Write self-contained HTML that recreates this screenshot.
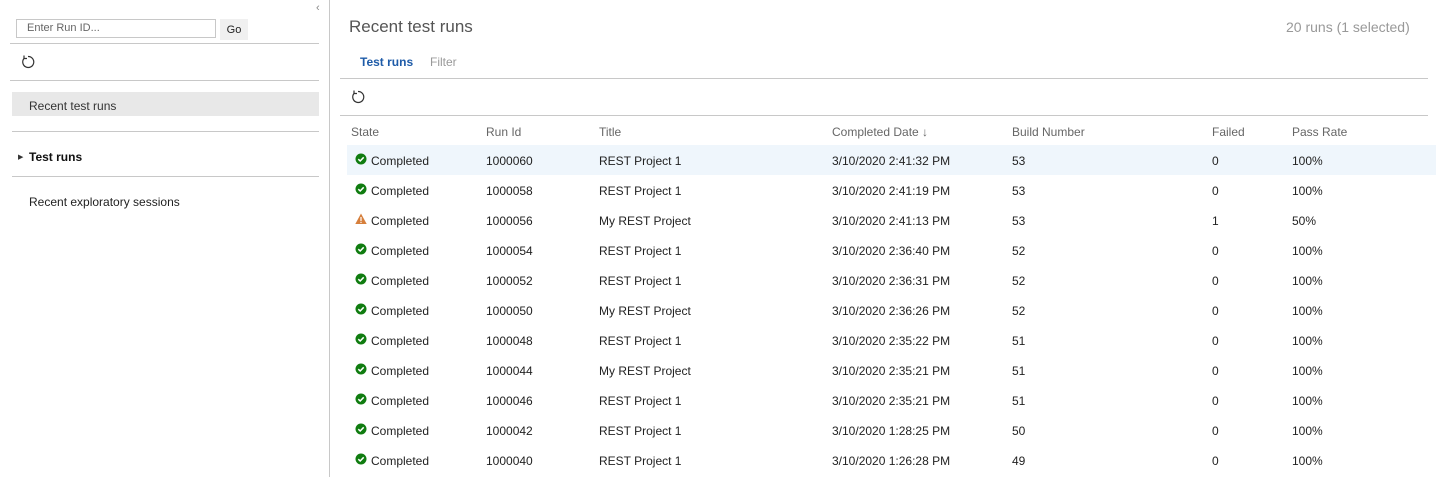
<!DOCTYPE html>
<html><head><style>
*{margin:0;padding:0;box-sizing:border-box}
body{width:1436px;height:477px;overflow:hidden;background:#fff;font-family:"Liberation Sans",sans-serif;font-size:12px;color:#222;position:relative}
.a{position:absolute;white-space:nowrap}
.hl{position:absolute;height:1px;background:#c8c8c8}
.h{color:#666}
.row{position:absolute;left:347px;right:0;height:30px}
.row span{position:absolute;top:9px}
</style></head><body>
<div class="a" style="left:329px;top:0;width:1px;height:477px;background:#c8c8c8"></div>
<div class="a" style="left:316px;top:2px;color:#888;font-size:11px">‹</div>
<div class="a" style="left:16px;top:19px;width:200px;height:19px;border:1px solid #c8c8c8;padding:2px 10px;color:#666;font-size:11px">Enter Run ID...</div>
<div class="a" style="left:220px;top:19px;width:28px;height:21px;background:#f0f0f0;text-align:center;padding-top:5px;font-size:11px">Go</div>
<div class="hl" style="left:10px;width:309px;top:43px"></div>
<svg class="a" style="left:20px;top:54px" width="16" height="16" viewBox="0 0 16 16"><path d="M4 4.5A5.5 5.5 0 1 0 8 2.5" fill="none" stroke="#333" stroke-width="1.2"/><path d="M4 1.5V4.5H7" fill="none" stroke="#333" stroke-width="1.2"/></svg>
<div class="hl" style="left:10px;width:309px;top:80px"></div>
<div class="a" style="left:12px;top:92px;width:307px;height:24px;background:#e8e8e8;padding:7px 17px;color:#333">Recent test runs</div>
<div class="hl" style="left:12px;width:307px;top:131px"></div>
<div class="a" style="left:18px;top:153px;font-size:7px;color:#333">▶</div>
<div class="a" style="left:29px;top:150px;font-weight:bold;color:#111">Test runs</div>
<div class="hl" style="left:12px;width:307px;top:176px"></div>
<div class="a" style="left:29px;top:195px;color:#222">Recent exploratory sessions</div>

<div class="a" style="left:349px;top:17px;font-size:17px;color:#555">Recent test runs</div>
<div class="a" style="left:1286px;top:19px;font-size:14px;color:#999">20 runs (1 selected)</div>
<div class="a" style="left:360px;top:55px;font-weight:bold;color:#1e5ba8">Test runs</div>
<div class="a" style="left:430px;top:55px;color:#999">Filter</div>
<div class="hl" style="left:340px;width:1088px;top:78px"></div>
<svg class="a" style="left:350px;top:89px" width="16" height="16" viewBox="0 0 16 16"><path d="M4 4.5A5.5 5.5 0 1 0 8 2.5" fill="none" stroke="#333" stroke-width="1.2"/><path d="M4 1.5V4.5H7" fill="none" stroke="#333" stroke-width="1.2"/></svg>
<div class="hl" style="left:340px;width:1088px;top:115px"></div>
<div class="a h" style="left:351px;top:125px">State</div>
<div class="a h" style="left:486px;top:125px">Run Id</div>
<div class="a h" style="left:599px;top:125px">Title</div>
<div class="a h" style="left:832px;top:125px">Completed Date ↓</div>
<div class="a h" style="left:1012px;top:125px">Build Number</div>
<div class="a h" style="left:1212px;top:125px">Failed</div>
<div class="a h" style="left:1292px;top:125px">Pass Rate</div>
<div id="rows"></div>
<script>
var d=[["1000060","REST Project 1","3/10/2020 2:41:32 PM","53","0","100%"],
["1000058","REST Project 1","3/10/2020 2:41:19 PM","53","0","100%"],
["1000056","My REST Project","3/10/2020 2:41:13 PM","53","1","50%"],
["1000054","REST Project 1","3/10/2020 2:36:40 PM","52","0","100%"],
["1000052","REST Project 1","3/10/2020 2:36:31 PM","52","0","100%"],
["1000050","My REST Project","3/10/2020 2:36:26 PM","52","0","100%"],
["1000048","REST Project 1","3/10/2020 2:35:22 PM","51","0","100%"],
["1000044","My REST Project","3/10/2020 2:35:21 PM","51","0","100%"],
["1000046","REST Project 1","3/10/2020 2:35:21 PM","51","0","100%"],
["1000042","REST Project 1","3/10/2020 1:28:25 PM","50","0","100%"],
["1000040","REST Project 1","3/10/2020 1:26:28 PM","49","0","100%"]];
var ok='<svg width="12" height="12" viewBox="0 0 12 12"><circle cx="6" cy="6" r="5.5" fill="#107c10"/><path d="M3.3 6.2L5.2 8L8.7 4.3" fill="none" stroke="#fff" stroke-width="1.5"/></svg>';
var wr='<svg width="12" height="12" viewBox="0 0 12 12"><path d="M6 0.5L11.7 11H0.3Z" fill="#d67f3c"/><rect x="5.4" y="4" width="1.2" height="4" fill="#fff"/><rect x="5.4" y="8.8" width="1.2" height="1.2" fill="#fff"/></svg>';
var h='';
d.forEach(function(r,i){
h+='<div class="row" style="top:'+(145+i*30)+'px;'+(i==0?'background:#eff6fc':'')+'"><span style="left:8px;top:8px">'+(i==2?wr:ok)+'</span><span style="left:24px">Completed</span><span style="left:139px">'+r[0]+'</span><span style="left:252px">'+r[1]+'</span><span style="left:485px">'+r[2]+'</span><span style="left:665px">'+r[3]+'</span><span style="left:865px">'+r[4]+'</span><span style="left:945px">'+r[5]+'</span></div>';});
document.getElementById('rows').innerHTML=h;
</script>
</body></html>
